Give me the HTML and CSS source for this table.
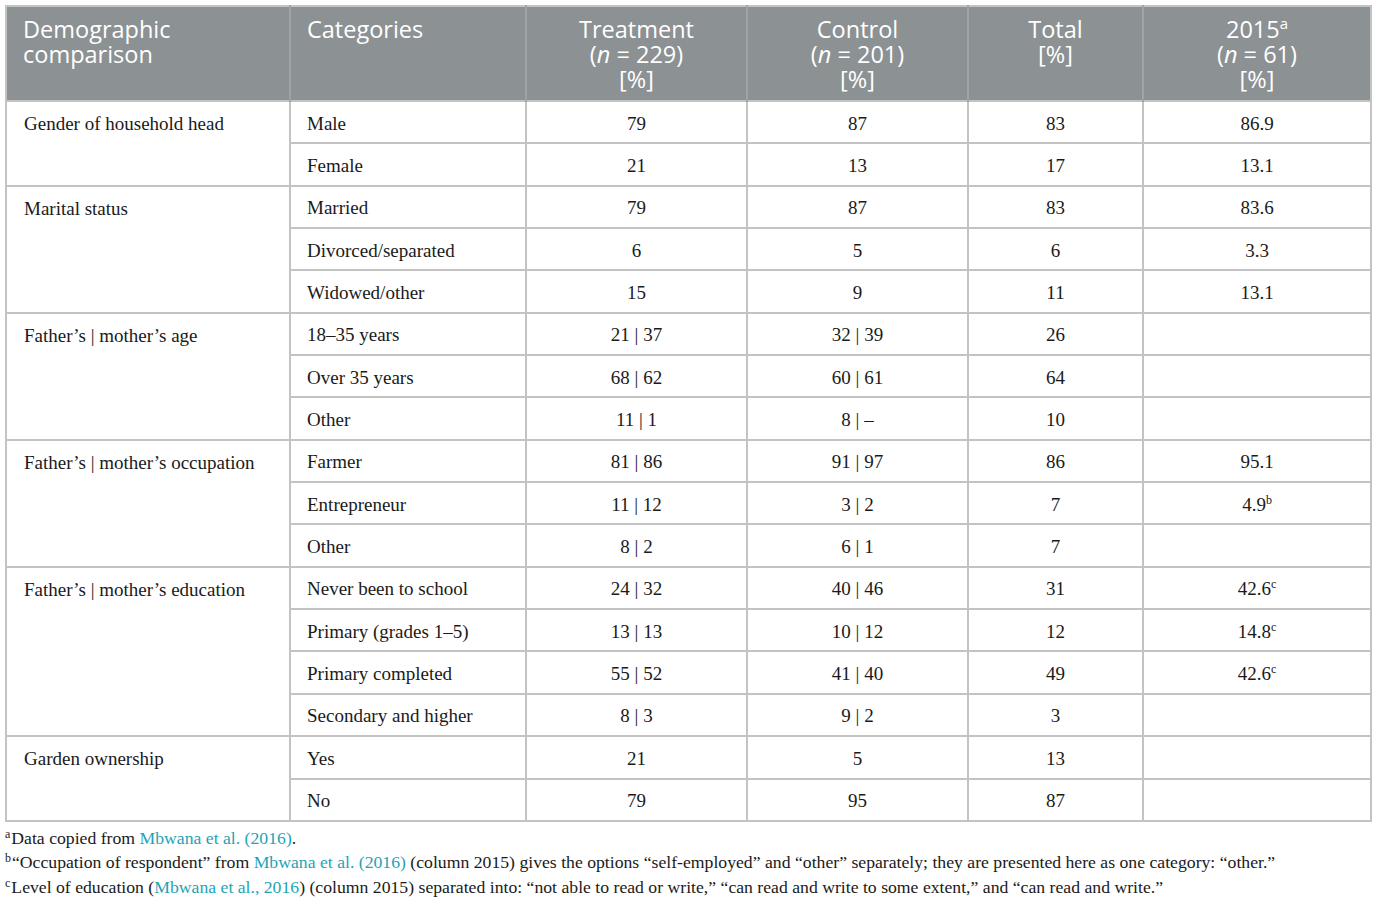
FILE: index.html
```html
<!DOCTYPE html>
<html>
<head>
<meta charset="utf-8">
<link rel="stylesheet" href="styles.css">
</head>
<body>
<table class="data">
  <colgroup>
    <col class="c1"><col class="c2"><col class="c3"><col class="c4"><col class="c5"><col class="c6">
  </colgroup>
  <thead>
    <tr>
      <th class="left">Demographic<br>comparison</th>
      <th class="left">Categories</th>
      <th>Treatment<br>(<i>n</i> = 229)<br>[%]</th>
      <th>Control<br>(<i>n</i> = 201)<br>[%]</th>
      <th>Total<br>[%]</th>
      <th>2015<sup>a</sup><br>(<i>n</i> = 61)<br>[%]</th>
    </tr>
  </thead>
  <tbody>
    <tr><td class="grp" rowspan="2">Gender of household head</td><td class="cat">Male</td><td>79</td><td>87</td><td>83</td><td>86.9</td></tr>
    <tr><td class="cat">Female</td><td>21</td><td>13</td><td>17</td><td>13.1</td></tr>
    <tr><td class="grp" rowspan="3">Marital status</td><td class="cat">Married</td><td>79</td><td>87</td><td>83</td><td>83.6</td></tr>
    <tr><td class="cat">Divorced/separated</td><td>6</td><td>5</td><td>6</td><td>3.3</td></tr>
    <tr><td class="cat">Widowed/other</td><td>15</td><td>9</td><td>11</td><td>13.1</td></tr>
    <tr><td class="grp" rowspan="3">Father’s | mother’s age</td><td class="cat">18–35 years</td><td>21 | 37</td><td>32 | 39</td><td>26</td><td></td></tr>
    <tr><td class="cat">Over 35 years</td><td>68 | 62</td><td>60 | 61</td><td>64</td><td></td></tr>
    <tr><td class="cat">Other</td><td>11 | 1</td><td>8 | –</td><td>10</td><td></td></tr>
    <tr><td class="grp" rowspan="3">Father’s | mother’s occupation</td><td class="cat">Farmer</td><td>81 | 86</td><td>91 | 97</td><td>86</td><td>95.1</td></tr>
    <tr><td class="cat">Entrepreneur</td><td>11 | 12</td><td>3 | 2</td><td>7</td><td>4.9<sup>b</sup></td></tr>
    <tr><td class="cat">Other</td><td>8 | 2</td><td>6 | 1</td><td>7</td><td></td></tr>
    <tr><td class="grp" rowspan="4">Father’s | mother’s education</td><td class="cat">Never been to school</td><td>24 | 32</td><td>40 | 46</td><td>31</td><td>42.6<sup>c</sup></td></tr>
    <tr><td class="cat">Primary (grades 1–5)</td><td>13 | 13</td><td>10 | 12</td><td>12</td><td>14.8<sup>c</sup></td></tr>
    <tr><td class="cat">Primary completed</td><td>55 | 52</td><td>41 | 40</td><td>49</td><td>42.6<sup>c</sup></td></tr>
    <tr><td class="cat">Secondary and higher</td><td>8 | 3</td><td>9 | 2</td><td>3</td><td></td></tr>
    <tr><td class="grp" rowspan="2">Garden ownership</td><td class="cat">Yes</td><td>21</td><td>5</td><td>13</td><td></td></tr>
    <tr><td class="cat">No</td><td>79</td><td>95</td><td>87</td><td></td></tr>
  </tbody>
</table>
<div class="notes">
  <p><sup>a</sup>Data copied from <a class="ref">Mbwana et al. (2016)</a>.</p>
  <p><sup>b</sup>“Occupation of respondent” from <a class="ref">Mbwana et al. (2016)</a> (column 2015) gives the options “self-employed” and “other” separately; they are presented here as one category: “other.”</p>
  <p><sup>c</sup>Level of education (<a class="ref">Mbwana et al., 2016</a>) (column 2015) separated into: “not able to read or write,” “can read and write to some extent,” and “can read and write.”</p>
</div>
</body>
</html>
```

FILE: styles.css
```css
html, body {
  margin: 0;
  padding: 0;
  background: #ffffff;
}
body {
  padding: 5px 0 0 5px;
  font-family: "Liberation Serif", "Times New Roman", serif;
  color: #1a1a1a;
}
.data {
  border-collapse: collapse;
  width: 1365px;
  table-layout: fixed;
}
.c1 { width: 284px; }
.c2 { width: 236px; }
.c3 { width: 221px; }
.c4 { width: 221px; }
.c5 { width: 175px; }
.c6 { width: 228px; }
.data th {
  background: #8c9194;
  color: #ffffff;
  font-family: "Open Sans", "Liberation Sans", sans-serif;
  font-weight: 400;
  font-size: 23.5px;
  line-height: 25px;
  height: 95px;
  box-sizing: border-box;
  padding: 10px 10px 0 10px;
  text-align: center;
  vertical-align: top;
  border: 2px solid #c3c3c3;
  border-left-color: #9ea3a6;
  border-right-color: #9ea3a6;
  border-bottom: none;
}
.data th:first-child { border-left-color: #c3c3c3; }
.data th:last-child { border-right-color: #c3c3c3; }
.data th.left {
  text-align: left;
  padding-left: 16px;
}
.data th sup {
  font-size: 15px;
  line-height: 0;
  vertical-align: 9px;
}
.data td {
  border: 2px solid #c3c3c3;
  font-size: 19px;
  height: 42.35px;
  box-sizing: border-box;
  padding: 3px 10px 0 10px;
  text-align: center;
  vertical-align: middle;
  line-height: 22px;
}
.data td.grp {
  text-align: left;
  vertical-align: top;
  padding: 11px 16px 0 17px;
}
.data td.cat {
  text-align: left;
  padding-left: 16px;
}
.data td sup {
  font-size: 12px;
  line-height: 0;
  vertical-align: 7px;
}
.notes {
  padding-top: 4px;
  font-size: 17.7px;
  line-height: 24.6px;
}
.notes p {
  margin: 0;
}
.notes sup {
  font-size: 12px;
  line-height: 0;
  vertical-align: 6px;
  margin-right: 1px;
}
.ref {
  color: #1fa3b5;
  text-decoration: none;
}
```
